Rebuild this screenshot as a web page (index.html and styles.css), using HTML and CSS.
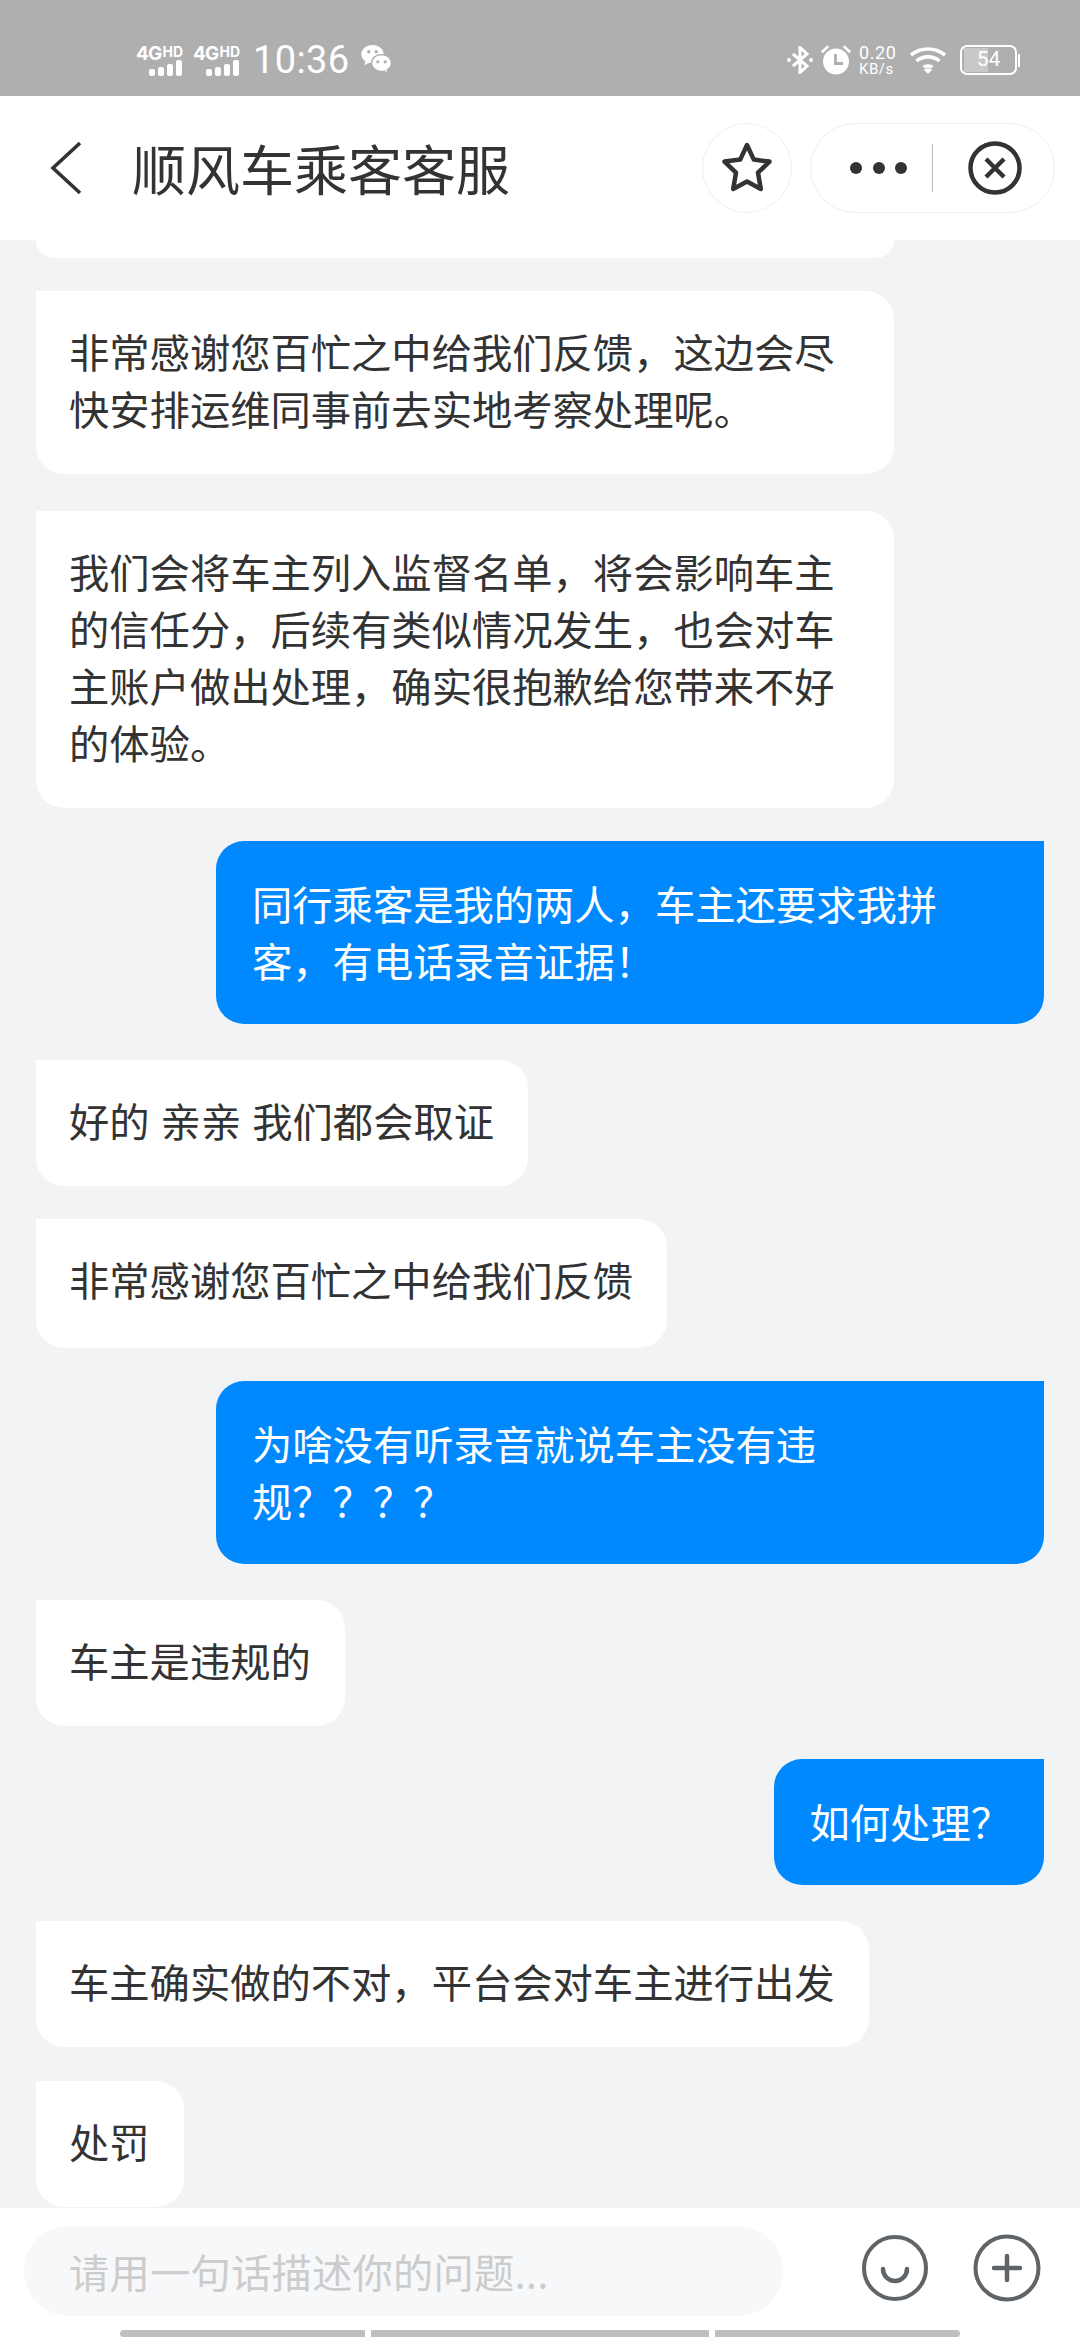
FILE: index.html
```html
<!DOCTYPE html>
<html lang="zh-CN">
<head>
    <meta charset="UTF-8">
    <meta name="viewport" content="width=device-width, initial-scale=1.0">
    <title>顺风车乘客客服</title>
    <link rel="stylesheet" href="styles.css">
</head>
<body>
    <div class="app">
        <!-- 状态栏 -->
        <div class="status-bar">
            <div class="signal">
                <div class="signal-text">4G<span class="signal-hd">HD</span></div>
                <div class="signal-bars"><i class="b1"></i><i class="b2"></i><i class="b3"></i><i class="b4"></i></div>
            </div>
            <div class="signal">
                <div class="signal-text">4G<span class="signal-hd">HD</span></div>
                <div class="signal-bars"><i class="b1"></i><i class="b2"></i><i class="b3"></i><i class="b4"></i></div>
            </div>
            <div class="clock">10:36</div>
            <svg class="wechat-icon" width="31" height="30" viewBox="0 0 31 30">
                <path fill="#fff" d="M11.500 0C5.300 0 .3 4.100 .3 9.200c0 2.900 1.600 5.400 4.100 7.100l-.9 3.900 4.500-2.400c1.100 .3 2.300 .5 3.500 .5 6.200 0 11.200-4 11.200-9.100S17.700 0 11.500 0z"/>
                <circle cx="7.800" cy="6.800" r="1.700" fill="#afafaf"/>
                <circle cx="15.200" cy="6.800" r="1.700" fill="#afafaf"/>
                <path fill="#fff" stroke="#afafaf" stroke-width="1.500" d="M20.500 9.500c-5.600 0-10 3.800-10 8.500s4.400 8.500 10 8.500c1 0 1.900-.1 2.800-.4l3.700 3-.7-4.300c2.500-1.500 4.200-4 4.200-6.800 0-4.700-4.400-8.500-10-8.500z"/>
                <circle cx="16.800" cy="16.800" r="1.600" fill="#afafaf"/>
                <circle cx="24.200" cy="16.800" r="1.600" fill="#afafaf"/>
            </svg>
            <div class="status-spacer"></div>
            <svg class="bt-icon" width="26" height="28" viewBox="0 0 26 28" fill="none">
                <path stroke="#fff" stroke-width="3" d="M6 8l14 12-7 6.500V1.500L20 8 6 20"/>
                <circle cx="2" cy="14" r="2" fill="#fff"/>
                <circle cx="24" cy="14" r="2" fill="#fff"/>
            </svg>
            <svg class="alarm-icon" width="30" height="30" viewBox="0 0 30 30">
                <circle cx="15" cy="16.500" r="13" fill="#fff"/>
                <path stroke="#fff" stroke-width="2.600" stroke-linecap="round" d="M1.500 6.500L6.500 2M28.500 6.500L23.500 2"/>
                <path stroke="#afafaf" stroke-width="2.800" fill="none" d="M14.500 9v9.500H22"/>
            </svg>
            <div class="speed">
                <div class="speed-num">0.20</div>
                <div class="speed-unit">KB/s</div>
            </div>
            <svg class="wifi-icon" width="36" height="27" viewBox="0 0 36 27" fill="none">
                <path stroke="#fff" stroke-width="3.600" d="M1 8C10.500 0 25.500 0 35 8"/>
                <path stroke="#fff" stroke-width="3.600" d="M6.500 14c6.500-5.500 16.500-5.500 23 0"/>
                <path fill="#fff" d="M12.500 19c3.200-2.500 7.800-2.500 11 0l-2.300 2.600c-2-1.300-4.400-1.300-6.400 0z"/>
                <path fill="#fff" d="M13.800 22.800c2.600-1.800 5.800-1.800 8.400 0L18 27z"/>
            </svg>
            <div class="battery">
                <div class="battery-box">
                    <div class="battery-level"></div>
                    <span class="battery-num">54</span>
                </div>
                <div class="battery-nub"></div>
            </div>
        </div>

        <!-- 标题栏 -->
        <div class="title-bar">
            <svg class="back-icon" width="32" height="54" viewBox="0 0 32 54" fill="none">
                <path stroke="#333" stroke-width="3.600" d="M30 2L3 27l27 25"/>
            </svg>
            <div class="page-title">顺风车乘客客服</div>
            <div class="fav-button">
                <svg width="50" height="52" viewBox="0 0 50 52" fill="none">
                    <path stroke="#333" stroke-width="4.500" stroke-linejoin="round" d="M25 3l6.800 14.600 15.700 2-11.500 11 2.800 16.400L25 39.500 11.200 47 14 30.600 2.500 19.600l15.700-2z"/>
                </svg>
            </div>
            <div class="capsule">
                <div class="dots"><i></i><i></i><i></i></div>
                <div class="capsule-line"></div>
                <svg class="close-icon" width="54" height="54" viewBox="0 0 54 54" fill="none">
                    <circle cx="27" cy="27" r="24.500" stroke="#333" stroke-width="4.500"/>
                    <path stroke="#333" stroke-width="4.500" d="M18 18l18 18M36 18L18 36"/>
                </svg>
            </div>
        </div>

        <!-- 消息列表 -->
        <div class="chat-list">
            <div class="bubble bubble-left bubble-cut"></div>
            <div class="bubble bubble-left">非常感谢您百忙之中给我们反馈，这边会尽快安排运维同事前去实地考察处理呢。</div>
            <div class="bubble bubble-left gap-37">我们会将车主列入监督名单，将会影响车主的信任分，后续有类似情况发生，也会对车主账户做出处理，确实很抱歉给您带来不好的体验。</div>
            <div class="bubble bubble-right">同行乘客是我的两人，车主还要求我拼客，有电话录音证据！</div>
            <div class="bubble bubble-left gap-36">好的 亲亲 我们都会取证</div>
            <div class="bubble bubble-left bubble-tall">非常感谢您百忙之中给我们反馈</div>
            <div class="bubble bubble-right">为啥没有听录音就说车主没有违规？？？？</div>
            <div class="bubble bubble-left gap-36">车主是违规的</div>
            <div class="bubble bubble-right">如何处理？</div>
            <div class="bubble bubble-left gap-36">车主确实做的不对，平台会对车主进行出发</div>
            <div class="bubble bubble-left gap-34">处罚</div>
        </div>

        <!-- 底部输入 -->
        <div class="footer">
            <div class="input-row">
                <div class="input-box">请用一句话描述你的问题...</div>
                <svg class="tool-icon smile-icon" width="68" height="68" viewBox="0 0 68 68" fill="none">
                    <circle cx="34" cy="34" r="31" stroke="#5f6469" stroke-width="4"/>
                    <path stroke="#5f6469" stroke-width="4.500" stroke-linecap="round" d="M22 35a12 12 0 0 0 24 0"/>
                </svg>
                <svg class="tool-icon" width="68" height="68" viewBox="0 0 68 68" fill="none">
                    <circle cx="34" cy="34" r="31.500" stroke="#5f6469" stroke-width="4"/>
                    <path stroke="#5f6469" stroke-width="4.500" stroke-linecap="round" d="M34 22v24M21 34h26"/>
                </svg>
            </div>
            <div class="home-bar">
                <div class="home-seg home-seg-a"></div>
                <div class="home-seg home-seg-b"></div>
                <div class="home-seg home-seg-c"></div>
            </div>
        </div>
    </div>
</body>
</html>
```

FILE: styles.css
```css
body, html {
    margin: 0;
    padding: 0;
    height: 100%;
    width: 100%;
    font-family: "Noto Sans CJK SC", "Noto Sans", sans-serif;
    background-color: #f2f3f5;
    overflow: hidden;
}

.app {
    display: flex;
    flex-direction: column;
    height: 2340px;
    width: 1080px;
}

/* 状态栏 */
.status-bar {
    display: flex;
    align-items: center;
    flex-shrink: 0;
    height: 96px;
    padding: 24px 60px 0 136px;
    box-sizing: border-box;
    background-color: #afafaf;
    color: #fff;
}

.signal {
    width: 46px;
    margin-right: 11px;
}

.signal-text {
    height: 15px;
    font-family: Inter, Roboto, sans-serif;
    font-size: 19px;
    font-weight: 700;
    line-height: 15px;
    white-space: nowrap;
    letter-spacing: -0.8px;
}

.signal-hd {
    margin-left: 1px;
    font-size: 14px;
    letter-spacing: 0;
    vertical-align: 3px;
}

.signal-bars {
    display: flex;
    align-items: flex-end;
    justify-content: flex-end;
    gap: 3px;
    height: 17px;
}

.signal-bars i {
    display: block;
    width: 6px;
    border-radius: 2px;
    background-color: #fff;
}

.b1 { height: 7px; }
.b2 { height: 9px; }
.b3 { height: 12px; }
.b4 { height: 16px; }

.clock {
    margin-left: 3px;
    font-family: Roboto, sans-serif;
    font-size: 38px;
    line-height: 40px;
    letter-spacing: 0.4px;
}

.wechat-icon {
    margin-left: 11px;
}

.status-spacer {
    flex-grow: 1;
}

.alarm-icon {
    margin-left: 8px;
}

.speed {
    margin-left: 8px;
    width: 38px;
    font-family: Roboto, sans-serif;
    color: #fff;
}

.speed-num {
    font-size: 18px;
    line-height: 18px;
    letter-spacing: 0.6px;
}

.speed-unit {
    font-size: 15px;
    line-height: 15px;
    letter-spacing: 0.5px;
}

.wifi-icon {
    margin-left: 13px;
}

.battery {
    display: flex;
    align-items: center;
    margin-left: 14px;
}

.battery-box {
    position: relative;
    width: 57px;
    height: 30px;
    box-sizing: border-box;
    border: 2.5px solid #fff;
    border-radius: 7px;
    padding: 1px 2px;
}

.battery-level {
    width: 49%;
    height: 100%;
    background-color: #c8c8c8;
}

.battery-num {
    position: absolute;
    top: 0;
    left: 0;
    width: 100%;
    font-family: Roboto, sans-serif;
    font-size: 21px;
    line-height: 25px;
    text-align: center;
}

.battery-nub {
    width: 2px;
    height: 13px;
    margin-left: 1px;
    background-color: #fff;
}

/* 标题栏 */
.title-bar {
    position: relative;
    z-index: 1;
    display: flex;
    align-items: center;
    flex-shrink: 0;
    height: 144px;
    padding: 0 25px 0 50px;
    box-sizing: border-box;
    background-color: #fff;
}

.page-title {
    flex-grow: 1;
    margin-left: 50px;
    font-size: 54px;
    line-height: 62px;
    color: #333;
}

.fav-button {
    display: flex;
    align-items: center;
    justify-content: center;
    width: 90px;
    height: 90px;
    box-sizing: border-box;
    border: 1px solid #eee;
    border-radius: 50%;
}

.capsule {
    display: flex;
    align-items: center;
    width: 245px;
    height: 90px;
    margin-left: 18px;
    box-sizing: border-box;
    border: 1px solid #eee;
    border-radius: 45px;
}

.dots {
    display: flex;
    gap: 10.5px;
    margin-left: 39px;
}

.dots i {
    display: block;
    width: 12px;
    height: 12px;
    border-radius: 50%;
    background-color: #333;
}

.capsule-line {
    width: 1px;
    height: 48px;
    margin-left: 25px;
    background-color: #bbb;
}

.close-icon {
    margin-left: 35px;
}

/* 消息列表 */
.chat-list {
    display: flex;
    flex-direction: column;
    flex-grow: 1;
    padding: 0 36px;
    overflow: hidden;
}

.bubble {
    flex-shrink: 0;
    box-sizing: border-box;
    margin-top: 33px;
    font-size: 40.3px;
    line-height: 57px;
    word-spacing: 2px;
}

.bubble-left {
    align-self: flex-start;
    max-width: 858px;
    padding: 31px 34px 38px 33px;
    border-radius: 0 28px 28px 28px;
    background-color: #fff;
    color: #333;
}

.bubble-right {
    align-self: flex-end;
    max-width: 828px;
    padding: 33px 33px 36px 36px;
    border-radius: 28px 0 28px 28px;
    background-color: #0089ff;
    color: #fff;
}

.bubble-cut {
    width: 858px;
    height: 18px;
    margin-top: 0;
    padding: 0;
    border-radius: 0 0 28px 28px;
}

.bubble-tall {
    padding-bottom: 41px;
}

/* 气泡间距不完全一致 */
.gap-34 { margin-top: 34px; }
.gap-36 { margin-top: 36px; }
.gap-37 { margin-top: 37px; }

/* 底部输入 */
.footer {
    flex-shrink: 0;
    height: 132px;
    background-color: #fff;
}

.input-row {
    display: flex;
    align-items: center;
    height: 122px;
    padding: 18px 39px 14px 24px;
    box-sizing: border-box;
}

.input-box {
    display: flex;
    align-items: center;
    width: 759px;
    height: 90px;
    padding-left: 45px;
    padding-bottom: 2px;
    box-sizing: border-box;
    border-radius: 45px;
    background-color: #f7f8fa;
    font-size: 40.3px;
    letter-spacing: 0.2px;
    color: #ccc;
}

.tool-icon {
    flex-shrink: 0;
    margin-bottom: 7px;
}

.smile-icon {
    margin-left: 78px;
    margin-right: 44px;
}

.home-bar {
    display: flex;
    gap: 6px;
    height: 7px;
    padding-left: 120px;
}

.home-seg {
    background-color: #bfbfbf;
}

.home-seg-a {
    width: 245px;
    border-radius: 4px 0 0 4px;
}

.home-seg-b {
    width: 338px;
}

.home-seg-c {
    width: 245px;
    border-radius: 0 4px 4px 0;
}
```
